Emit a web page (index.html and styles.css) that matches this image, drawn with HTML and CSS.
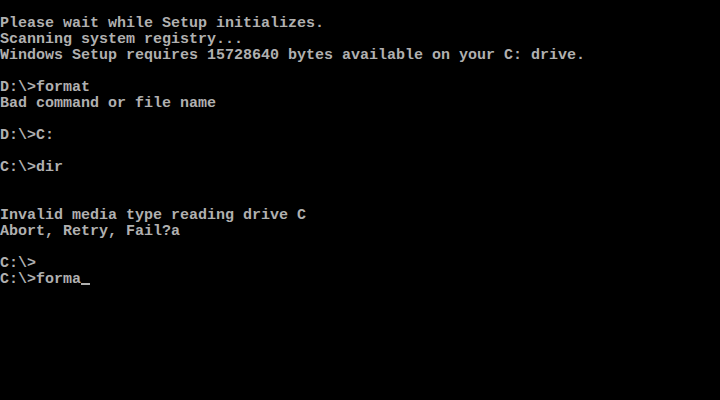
FILE: index.html
```html
<!DOCTYPE html>
<html>
<head>
<meta charset="utf-8">
<link rel="stylesheet" href="styles.css">
</head>
<body>
<pre class="screen">
Please wait while Setup initializes.
Scanning system registry...
Windows Setup requires 15728640 bytes available on your C: drive.

D:\&gt;format
Bad command or file name

D:\&gt;C:

C:\&gt;dir


Invalid media type reading drive C
Abort, Retry, Fail?a

C:\&gt;
C:\&gt;forma<span class="cursor"></span></pre>
</body>
</html>
```
FILE: styles.css
```css
html, body {
  margin: 0;
  padding: 0;
  background: #000;
  width: 720px;
  height: 400px;
  overflow: hidden;
}
.screen {
  margin: 0;
  padding: 16px 0 0 0;
  font-family: "Liberation Mono", "DejaVu Sans Mono", monospace;
  font-size: 15px;
  font-weight: bold;
  line-height: 16px;
  color: #b0b0b0;
  white-space: pre;
}
.cursor {
  display: inline-block;
  width: 9px;
  height: 2px;
  background: #b0b0b0;
  vertical-align: -2px;
}
```
